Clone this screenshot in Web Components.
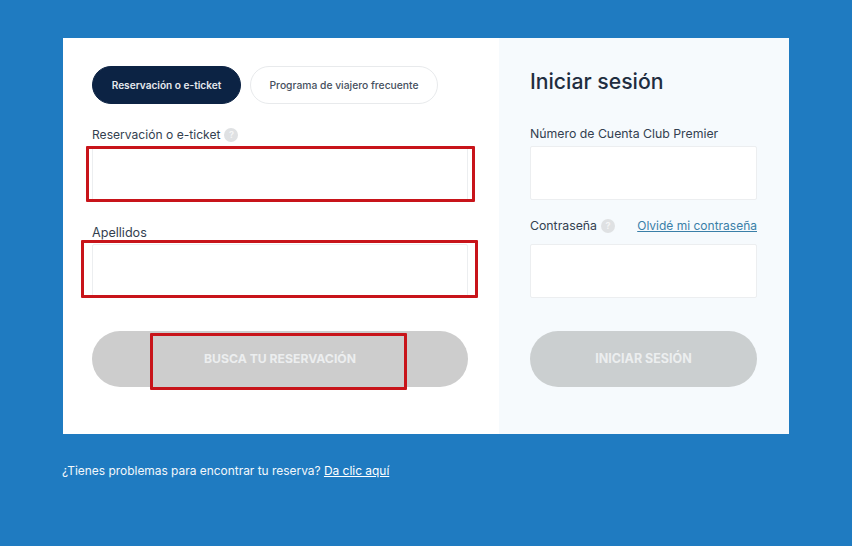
<!DOCTYPE html>
<html lang="es"><head><meta charset="utf-8"><title>Reserva</title>
<style>
html,body{margin:0;height:546px;overflow:hidden}
body{background:#1f7bc1;font-family:Inter,"Liberation Sans",sans-serif;color:#1c2b3f}
</style></head><body>
<booking-page>
  <booking-card>
    <form-panel slot="left">
      <tab-row>
        <pill-tab active>Reservación o e-ticket</pill-tab>
        <pill-tab>Programa de viajero frecuente</pill-tab>
      </tab-row>
      <form-field help style="--gap:5px;--mt:24px;--fs:12.1px">Reservación o e-ticket</form-field>
      <form-field style="--gap:4px;--mt:25px;--fs:12.6px">Apellidos</form-field>
      <action-button style="--mt:33px;--bg:#cdcdcd">BUSCA TU RESERVACIÓN</action-button>
      <red-mark style="left:23px;top:108px;width:389px;height:56px"></red-mark>
      <red-mark style="left:18px;top:202px;width:397px;height:58px"></red-mark>
      <red-mark style="left:87px;top:295px;width:257px;height:57px"></red-mark>
    </form-panel>
    <form-panel slot="right" side>
      <panel-title>Iniciar sesión</panel-title>
      <form-field style="--gap:5px;--mt:33px;--fs:12.3px">Número de Cuenta Club Premier</form-field>
      <form-field help link="Olvidé mi contraseña" style="--gap:11px;--mt:19px;--fs:12.3px">Contraseña</form-field>
      <action-button style="--mt:33px;--bg:#cbcfd0;--fs:12.5px">INICIAR SESIÓN</action-button>
    </form-panel>
  </booking-card>
  <help-line>¿Tienes problemas para encontrar tu reserva? <a>Da clic aquí</a></help-line>
</booking-page>
<script>
function def(name, css, html){
  customElements.define(name, class extends HTMLElement{
    constructor(){super();const r=this.attachShadow({mode:'open'});
      r.innerHTML='<style>'+css+'</style>'+(typeof html==='function'?html(this):html);}
  });
}
def('booking-page',':host{display:block;padding:38px 63px 0}','<slot></slot>');
def('booking-card',':host{display:flex;width:726px;height:396px;background:#fff}::slotted([slot=left]){width:436px}::slotted([slot=right]){width:290px}','<slot name="left"></slot><slot name="right"></slot>');
def('form-panel',`:host{display:flex;flex-direction:column;box-sizing:border-box;position:relative;padding:28px 31px 0 29px}
:host([side]){background:#f6fafd;padding:30px 32px 0 31px}`,'<slot></slot>');
def('tab-row',':host{display:flex;gap:9px}','<slot></slot>');
def('pill-tab',`:host{box-sizing:border-box;height:38px;border:1px solid #e8eaec;border-radius:19px;background:#fff;color:#46505e;font-size:10.3px;font-weight:500;display:flex;align-items:center;justify-content:center;white-space:nowrap;width:188px}
:host([active]){background:#0c2344;border-color:#0c2344;color:#e6e9ee;font-weight:600;font-size:10.1px;width:149px}`,'<slot></slot>');
def('panel-title',':host{display:block;font-size:21.2px;font-weight:500;line-height:26px;color:#1f2d40}','<slot></slot>');
def('form-field',`:host{display:block;margin-top:var(--mt,0)}
.lab{display:flex;align-items:center;height:14px;font-size:var(--fs,12.2px);line-height:14px;color:#333f50;white-space:nowrap}
.q{width:14px;height:14px;border-radius:50%;background:#dfe1e3;color:#f4f5f6;font-size:9px;font-weight:700;display:flex;align-items:center;justify-content:center;margin-left:4px}
a{margin-left:auto;color:#3a7fa8;text-decoration:underline;font-size:12px}
.box{box-sizing:border-box;height:54px;margin-top:var(--gap,12px);background:#fff;border:1px solid #eceef0;border-radius:2px}`,
 el=>'<div class="lab"><slot></slot>'+(el.hasAttribute('help')?'<span class="q">?</span>':'')+(el.getAttribute('link')?'<a>'+el.getAttribute('link')+'</a>':'')+'</div><div class="box"></div>');
def('action-button',`:host{display:flex;align-items:center;justify-content:center;box-sizing:border-box;height:56px;padding-bottom:1px;border-radius:28px;background:var(--bg,#cdcfd0);color:#eceeef;font-size:var(--fs,12.2px);font-weight:700;margin-top:var(--mt,0)}`,'<slot></slot>');
def('red-mark',':host{position:absolute;box-sizing:border-box;border:3px solid #c8141a;border-radius:1px}','');
def('help-line',`:host{display:block;margin:29px 0 0 -1px;font-size:11.93px;line-height:16px;color:#f2f7fb}
::slotted(a){color:#fff;text-decoration:underline}`,'<slot></slot>');
</script>
</body></html>
